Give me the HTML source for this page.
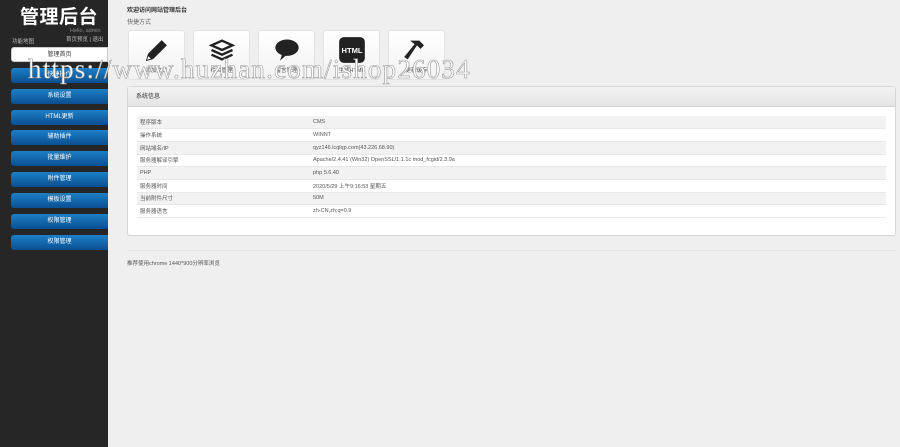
<!DOCTYPE html>
<html><head><meta charset="utf-8"><style>
*{margin:0;padding:0;box-sizing:border-box}
body{width:900px;height:447px;overflow:hidden;background:#efefef;font-family:"Liberation Sans","Noto Sans CJK SC",sans-serif;font-size:6px;color:#333;position:relative}
#side{position:absolute;left:0;top:0;width:108px;height:447px;background:#262626}
#side h1{position:absolute;left:20px;top:2px;font-size:19px;color:#fff;font-weight:bold;letter-spacing:0.5px}
.s{position:absolute;font-size:5.5px;color:#bbb}
.btn{position:absolute;left:11px;width:97px;height:15px;border-radius:3px 0 0 3px;background:linear-gradient(#1d7fc6,#0a4f91);color:#fff;text-align:center;line-height:15px;font-size:6px}
.btn.w{background:#fff;color:#333;border:1px solid #ccc}
.q{position:absolute;top:30px;width:57px;height:50px;background:linear-gradient(#fff,#f2f2f2);border:1px solid #e2e2e2;border-radius:3px}
.q svg{position:absolute;left:14px;top:5px}
.q span{position:absolute;left:0;right:0;top:35px;text-align:center;font-size:5.5px;color:#555}
#panel{position:absolute;left:127px;top:86px;width:769px;height:150px;background:#fff;border:1px solid #d6d6d6;border-radius:3px}
#ph{height:20px;background:linear-gradient(#f3f3f3,#e4e4e4);border-bottom:1px solid #d4d4d4;padding-left:8px;line-height:20px;font-size:6px}
table{position:absolute;left:9px;top:29px;width:749px;border-collapse:collapse}
td{height:12.7px;font-size:5.5px;color:#555;border-bottom:1px solid #e8e8e8;padding-left:3px}
tr:nth-child(odd) td{background:#f2f2f2}
td:first-child{width:173px}
#wm{position:absolute;left:28px;top:54px;font-family:"Liberation Serif",serif;font-size:27px;color:#fff;-webkit-text-stroke:0.6px #999;letter-spacing:1.2px;white-space:nowrap}
</style></head><body>
<div id="side">
<h1>管理后台</h1>
<div class="s" style="left:70px;top:28px;color:#888">Hello, admin</div>
<div class="s" style="left:12px;top:37px">功能地图</div>
<div class="s" style="left:66px;top:35px">首页预览 | 退出</div>
<div class="btn w" style="top:47px">管理首页</div>
<div class="btn" style="top:68px">快捷操作</div>
<div class="btn" style="top:89px">系统设置</div>
<div class="btn" style="top:110px">HTML更新</div>
<div class="btn" style="top:130px">辅助插件</div>
<div class="btn" style="top:151px">批量维护</div>
<div class="btn" style="top:172px">附件管理</div>
<div class="btn" style="top:193px">模板设置</div>
<div class="btn" style="top:214px">权限管理</div>
<div class="btn" style="top:235px">权限管理</div>
</div>
<div style="position:absolute;left:127px;top:5px;font-size:6px;font-weight:bold">欢迎访问网站管理后台</div>
<div style="position:absolute;left:127px;top:17px;font-size:6px;color:#666">快捷方式</div>
<div class="q" style="left:128px"><svg width="28" height="28" viewBox="0 0 24 24"><path d="M3 21l1.5-6L16 3.5l4.5 4.5L9 19.5z" fill="#222"/><path d="M3 21l1.3-4.5 3.2 3.2z" fill="#fff" stroke="#222" stroke-width="0.8"/></svg><span>添加文章</span></div>
<div class="q" style="left:193px"><svg width="28" height="28" viewBox="0 0 24 24"><path d="M3 8l9-4 9 4-9 4z" fill="none" stroke="#222" stroke-width="2"/><path d="M3 12l9 4 9-4M3 16l9 4 9-4" fill="none" stroke="#222" stroke-width="2"/></svg><span>栏目管理</span></div>
<div class="q" style="left:258px"><svg width="28" height="28" viewBox="0 0 24 24"><ellipse cx="12" cy="10" rx="10" ry="7" fill="#222"/><path d="M8 15l-2 6 6-5z" fill="#222"/></svg><span>留言管理</span></div>
<div class="q" style="left:323px"><svg width="28" height="28" viewBox="0 0 24 24"><rect x="1" y="1" width="22" height="22" rx="4" fill="#222"/><text x="12" y="14.5" fill="#fff" font-size="6.5" font-weight="bold" text-anchor="middle" font-family="Liberation Sans">HTML</text></svg><span>生成HTML</span></div>
<div class="q" style="left:388px"><svg width="28" height="28" viewBox="0 0 24 24"><path d="M6 4l8 0 4 4-3 3-3-3-8 12-3-2 9-11-4-3z" fill="#222"/></svg><span>更新缓存</span></div>
<div id="panel"><div id="ph">系统信息</div>
<table>
<tr><td>程序版本</td><td>CMS</td></tr>
<tr><td>操作系统</td><td>WINNT</td></tr>
<tr><td>网站域名/IP</td><td>qyz146.lcqlqp.com(43.226.68.90)</td></tr>
<tr><td>服务器解译引擎</td><td>Apache/2.4.41 (Win32) OpenSSL/1.1.1c mod_fcgid/2.3.9a</td></tr>
<tr><td>PHP</td><td>php 5.6.40</td></tr>
<tr><td>服务器时间</td><td>2020/5/29 上午9:16:53 星期五</td></tr>
<tr><td>当前附件尺寸</td><td>50M</td></tr>
<tr><td>服务器语言</td><td>zh-CN,zh;q=0.9</td></tr>
</table></div>
<div style="position:absolute;left:127px;top:250px;width:769px;border-top:1px solid #e4e4e4"></div>
<div style="position:absolute;left:127px;top:259px;font-size:5.5px;color:#555">推荐使用chrome 1440*900分辨率浏览</div>
<div id="wm">https://www.huzhan.com/ishop26034</div>
</body></html>
